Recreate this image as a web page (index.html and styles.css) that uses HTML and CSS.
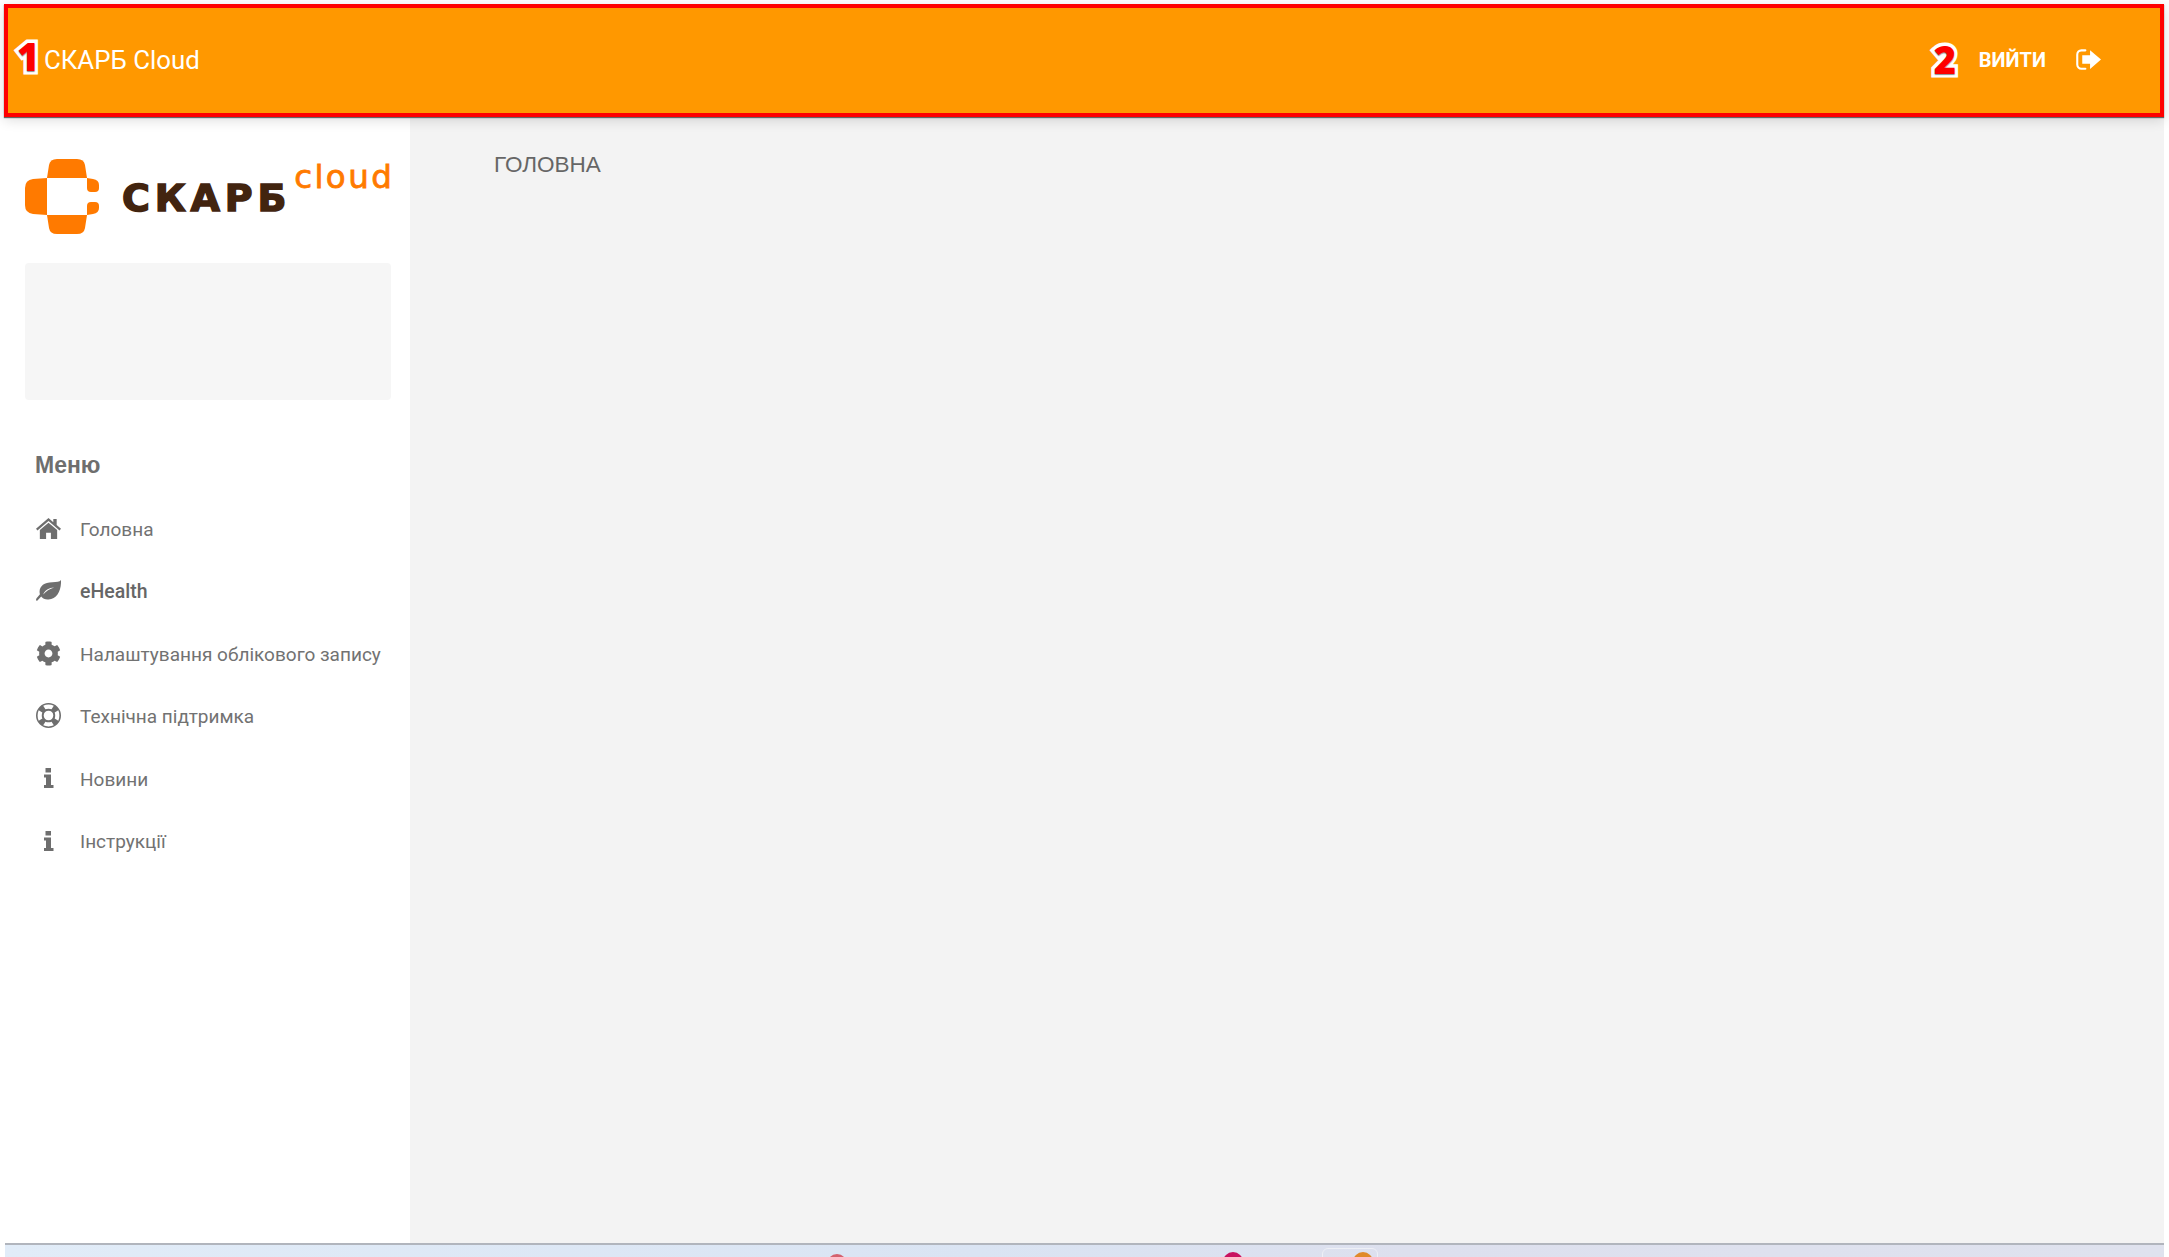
FILE: index.html
```html
<!DOCTYPE html>
<html lang="uk">
<head>
<meta charset="utf-8">
<title>СКАРБ Cloud</title>
<link rel="stylesheet" href="styles.css">
</head>
<body>
<div class="page">
  <header class="topbar">
    <span class="marker marker-one">1</span>
    <span class="brand">СКАРБ Cloud</span>
    <div class="logout">
      <span class="marker marker-two">2</span>
      <span class="logout-text">ВИЙТИ</span>
      <svg class="logout-icon" viewBox="0 0 24 20" aria-hidden="true">
        <path d="M9 1.2H5.2C2.9 1.2 1.2 3 1.2 5.2v9.6c0 2.200 1.700 4 4 4H9" fill="none" stroke="#fff" stroke-width="2" stroke-linecap="round"/>
        <path d="M13.500 1 24 10 13.500 19V14H6V6H13.500Z" fill="#fff"/>
      </svg>
    </div>
  </header>
  <div class="body-row">
    <aside class="sidebar">
      <div class="logo">
        <svg class="logo-mark" viewBox="0 0 74 75" aria-hidden="true">
          <path d="M22 19 24 6Q25 0 32 0H52Q59 0 60 6L62 19Z"/>
          <path d="M22 19V56L8 55Q0 54 0 46V29Q0 21 8 20Z"/>
          <path d="M22 56H62L60 69Q59 75 52 75H32Q25 75 24 69Z"/>
          <path d="M62 19 68 20Q74 21 74 26V29Q74 33 70 33H66Q62 33 62 29Z"/>
          <path d="M62 56V47Q62 43 66 43H70Q74 43 74 47V49Q74 54 68 55Z"/>
        </svg>
        <span class="logo-word">СКАРБ</span>
        <span class="logo-cloud">cloud</span>
      </div>
      <div class="profile-box"></div>
      <h2 class="menu-title">Меню</h2>
      <nav class="menu">
        <a class="menu-item">
          <svg class="menu-icon" viewBox="0 0 26 22" aria-hidden="true"><path d="M13 0 0 11.300 1.500 13 13 3.200 24.500 13 26 11.300 21.500 7.400V1H18V4.400Z"/><path d="M13 5 4 12.600V22H10.500V15.500H15.500V22H22V12.600Z"/></svg>
          <span>Головна</span>
        </a>
        <a class="menu-item menu-item-active">
          <svg class="menu-icon" viewBox="0 0 26 22" aria-hidden="true"><path d="M26 0C24.500 2 21.500 2.200 17 2.300 8.500 2.500 4 6 3.700 12c0 1 .1 2 .4 2.800L1 18.500c-.6.800-1 1.500-1 2.300 0 .8.900 1.200 1.500.6l3.900-4.200C7 19.500 9.500 20.500 13 20.300 22 19.800 26.500 11 26 0ZM7.500 15.200C9 11 13.500 8 19 8 14 9.500 10.500 12 7.500 15.200Z" fill-rule="evenodd"/></svg>
          <span>eHealth</span>
        </a>
        <a class="menu-item">
          <svg class="menu-icon" viewBox="0 0 512 512" aria-hidden="true"><path d="M487.4 315.700l-42.600-24.600c4.300-23.200 4.300-47 0-70.200l42.600-24.600c4.900-2.800 7.100-8.600 5.500-14-11.100-35.600-30-67.800-54.700-94.600-3.800-4.100-10-5.100-14.800-2.300L380.800 110c-17.900-15.400-38.500-27.300-60.800-35.100V25.800c0-5.600-3.900-10.500-9.400-11.700-36.700-8.200-74.300-7.800-109.200 0-5.500 1.200-9.400 6.100-9.400 11.700V75c-22.200 7.900-42.800 19.800-60.800 35.100L88.700 85.500c-4.900-2.800-11-1.900-14.800 2.300-24.700 26.700-43.600 58.900-54.700 94.600-1.700 5.400.6 11.200 5.500 14L67.300 221c-4.300 23.200-4.300 47 0 70.200l-42.600 24.600c-4.900 2.800-7.100 8.600-5.500 14 11.100 35.600 30 67.800 54.700 94.600 3.800 4.100 10 5.100 14.800 2.300l42.600-24.600c17.900 15.400 38.500 27.300 60.800 35.100v49.200c0 5.600 3.900 10.500 9.400 11.700 36.700 8.200 74.300 7.800 109.200 0 5.500-1.200 9.400-6.100 9.400-11.700v-49.200c22.200-7.900 42.800-19.800 60.800-35.100l42.600 24.600c4.900 2.800 11 1.900 14.800-2.300 24.700-26.700 43.600-58.900 54.700-94.600 1.500-5.500-.7-11.300-5.600-14.100zM256 336c-44.100 0-80-35.900-80-80s35.900-80 80-80 80 35.900 80 80-35.900 80-80 80z"/></svg>
          <span>Налаштування облікового запису</span>
        </a>
        <a class="menu-item">
          <svg class="menu-icon" viewBox="0 0 26 26" aria-hidden="true"><path fill-rule="evenodd" d="M13 0a13 13 0 1 0 0 26 13 13 0 0 0 0-26ZM13 8a5 5 0 1 1 0 10 5 5 0 0 1 0-10ZM7.500 2.800C10.800 1.300 15.200 1.300 18.500 2.800L16.200 6.600C14.300 5.800 11.700 5.800 9.800 6.600ZM23.200 7.500C24.700 10.800 24.700 15.200 23.200 18.500L19.400 16.200C20.200 14.300 20.200 11.700 19.400 9.800ZM18.500 23.200C15.200 24.700 10.800 24.700 7.500 23.200L9.800 19.400C11.700 20.200 14.300 20.200 16.200 19.400ZM2.800 18.500C1.300 15.200 1.300 10.800 2.800 7.500L6.600 9.800C5.800 11.700 5.800 14.300 6.600 16.200Z"/></svg>
          <span>Технічна підтримка</span>
        </a>
        <a class="menu-item">
          <svg class="menu-icon menu-icon-info" viewBox="0 0 10 20" aria-hidden="true"><path d="M2 0H7.500V4.500H2ZM.5 6.500H7.500V17H10V20H.5V17H2.500V9.500H.5Z"/></svg>
          <span>Новини</span>
        </a>
        <a class="menu-item">
          <svg class="menu-icon menu-icon-info" viewBox="0 0 10 20" aria-hidden="true"><path d="M2 0H7.500V4.500H2ZM.5 6.500H7.500V17H10V20H.5V17H2.500V9.500H.5Z"/></svg>
          <span>Інструкції</span>
        </a>
      </nav>
    </aside>
    <main class="content">
      <h1 class="page-title">ГОЛОВНА</h1>
    </main>
  </div>
  <div class="desktop-strip">
    <span class="tray-dot tray-dot-rose"></span>
    <span class="tray-dot tray-dot-magenta"></span>
    <span class="tray-tab"><span class="tray-dot tray-dot-orange"></span></span>
  </div>
</div>
</body>
</html>
```

FILE: styles.css
```css
* { box-sizing: border-box; }

html, body {
  margin: 0;
  height: 100%;
  background: #fff;
}

body {
  overflow: hidden;
  font-family: Roboto, "Liberation Sans", sans-serif;
}

.page {
  width: 2160px;
  height: 1257px;
  margin-left: 4px;
  padding-top: 4px;
  display: flex;
  flex-direction: column;
}

.topbar {
  position: relative;
  z-index: 2;
  flex: 0 0 113px;
  display: flex;
  align-items: center;
  justify-content: space-between;
  padding: 0 59px 0 36px;
  background: #ff9800;
  border: 4px solid #fe0000;
  box-shadow: 0 1px 1px #666, 0 3px 12px rgba(0, 0, 0, .14);
  color: #fff;
}

.brand {
  font-size: 25.800px;
  line-height: 1;
  position: relative;
}

.logout {
  display: flex;
  align-items: center;
  position: relative;
  top: -1px;
}

.logout-text {
  font-size: 20px;
  font-weight: 700;
  margin-right: 30px;
}

.logout-icon {
  width: 25px;
  height: 21px;
  display: block;
}

.marker {
  position: absolute;
  color: #fe0000;
  font-family: "Open Sans", "Liberation Sans", sans-serif;
  font-weight: 800;
  line-height: 1;
  -webkit-text-stroke: 7px #fff;
  paint-order: stroke fill;
  text-shadow: 0 1px 1px rgba(0, 0, 0, .45);
}

.marker-one {
  left: 9px;
  top: 29px;
  font-size: 38px;
}

.marker-two {
  right: 145px;
  top: -8px;
  font-size: 38px;
}

.body-row {
  flex: 1 1 auto;
  display: flex;
  min-height: 0;
}

.sidebar {
  flex: 0 0 406px;
  padding: 42px 0 0 21px;
  background: #fff;
}

.logo {
  position: relative;
  display: flex;
  align-items: flex-start;
  height: 75px;
}

.logo-mark {
  width: 74px;
  height: 75px;
  flex: none;
  fill: #ff7a00;
}

.logo-word {
  margin: 17px 0 0 23px;
  font-family: "DejaVu Sans", sans-serif;
  font-size: 38px;
  font-weight: 700;
  line-height: 44px;
  letter-spacing: 4.800px;
  color: #42240f;
  -webkit-text-stroke: 1.500px #42240f;
}

.logo-cloud {
  margin: 0 0 0 3px;
  font-family: "DejaVu Sans", sans-serif;
  font-size: 32.500px;
  line-height: 36px;
  letter-spacing: 2.400px;
  color: #ff7a00;
  -webkit-text-stroke: .8px #ff7a00;
}

.profile-box {
  width: 366px;
  height: 137px;
  margin-top: 29px;
  background: #f6f6f6;
  border-radius: 4px;
}

.menu-title {
  margin: 51px 0 0 10px;
  font-family: "Liberation Sans", sans-serif;
  font-size: 23px;
  line-height: 28px;
  font-weight: 700;
  color: #6e6e6e;
}

.menu {
  margin: 19px 0 0 11px;
  display: flex;
  flex-direction: column;
}

.menu-item {
  height: 62.500px;
  display: flex;
  align-items: center;
  gap: 19px;
  font-size: 19px;
  color: #727272;
}

.menu-item-active {
  font-size: 19.500px;
  font-weight: 500;
  color: #666;
}

.menu-icon {
  width: 25px;
  height: 25px;
  flex: none;
  fill: #6e6e6e;
  position: relative;
  top: -1px;
}

.menu-icon-info {
  height: 20px;
}

.content {
  flex: 1 1 auto;
  padding: 33px 0 0 84px;
  background: #f3f3f3;
}

.page-title {
  margin: 0;
  font-family: "Liberation Sans", sans-serif;
  font-size: 22.500px;
  line-height: 30px;
  font-weight: 400;
  color: #666;
}

.desktop-strip {
  position: relative;
  flex: 0 0 14px;
  margin-left: 1px;
  overflow: hidden;
  border-top: 2px solid #b1b5bd;
  background: linear-gradient(90deg, #e1ecf8 0%, #dae4f3 45%, #dde0ee 65%, #dfe2ee 100%);
}

.tray-dot {
  position: absolute;
  width: 20px;
  height: 20px;
  border-radius: 50%;
}

.tray-dot-rose {
  left: 822px;
  top: 9px;
  background: #d4616e;
}

.tray-dot-magenta {
  left: 1218px;
  top: 7px;
  background: #c9125f;
}

.tray-dot-orange {
  left: 30px;
  top: 3px;
  background: #e08a2a;
}

.tray-tab {
  position: absolute;
  left: 1317px;
  top: 3px;
  width: 56px;
  height: 24px;
  border: 1px solid #eef0f6;
  border-radius: 6px;
}
```
